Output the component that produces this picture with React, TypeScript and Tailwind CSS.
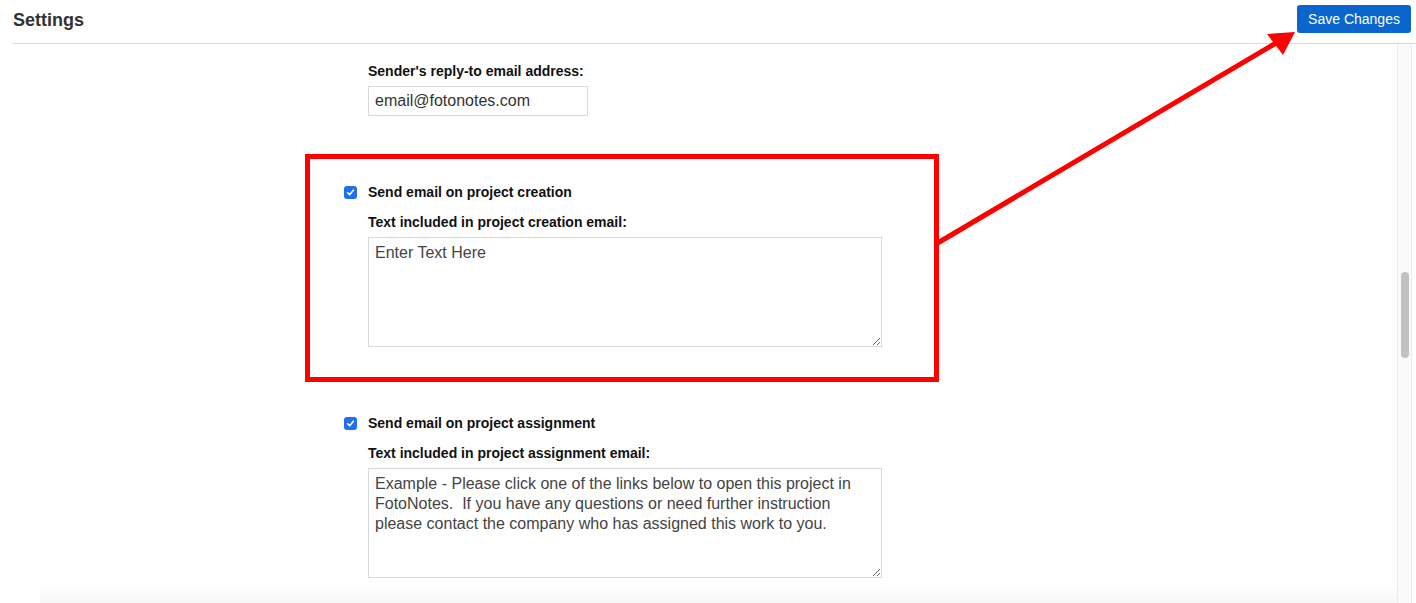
import React from 'react';

const font = "font-['Liberation_Sans',Arial,sans-serif]";

function Check({ label }: { label: string }) {
  return (
    <div className="flex items-center gap-[11px] h-[16px]">
      <span className="w-[13px] h-[13px] rounded-[3px] bg-[#1f6ff0] flex items-center justify-center">
        <svg width="9" height="9" viewBox="0 0 10 10" fill="none">
          <path d="M1.8 5.3 L4 7.4 L8.2 2.4" stroke="white" strokeWidth="1.8" strokeLinecap="round" strokeLinejoin="round" />
        </svg>
      </span>
      <span className="text-[14px] leading-[16px] font-bold text-[#111]">{label}</span>
    </div>
  );
}

function EmailSection({ check, label, text, highlight }: { check: string; label: string; text: string; highlight?: boolean }) {
  return (
    <div
      className={`w-[634px] border-[5px] pl-[34px] pt-[25px] pb-[30px] ${
        highlight ? 'border-[#ff0000]' : 'border-transparent mt-[3px]'
      }`}
    >
      <Check label={check} />
      <div className="pl-[24px]">
        <div className="mt-[14px] text-[14px] leading-[16px] font-bold text-[#111]">{label}</div>
        <textarea
          readOnly
          defaultValue={text}
          className="mt-[7px] block w-[514px] h-[110px] border border-[#d9d9d9] px-[6px] pt-[5px] text-[16px] leading-[20px] text-[#444] outline-none"
        />
      </div>
    </div>
  );
}

export default function App() {
  return (
    <div className={`relative w-[1416px] h-[603px] overflow-hidden bg-white ${font}`}>
      {/* Header */}
      <div className="flex justify-between h-[43px] pl-[13px] pr-[5px]">
        <h1 className="mt-[10px] text-[18px] leading-[20px] font-bold text-[#333]">Settings</h1>
        <button className="mt-[5px] h-[28px] w-[114px] rounded-[3px] bg-[#0a66cc] text-white text-[14px]">
          Save Changes
        </button>
      </div>
      <div className="ml-[12px] border-b border-[#dcdcdc]" />

      <div className="flex h-[559px]">
        {/* Main */}
        <div className="relative flex-1 flex flex-col pl-[305px]">
          <div className="pl-[63px] pt-[19px]">
            <div className="text-[14px] leading-[16px] font-bold text-[#111]">Sender's reply-to email address:</div>
            <input
              readOnly
              defaultValue="email@fotonotes.com"
              className="mt-[7px] block w-[220px] h-[30px] border border-[#d9d9d9] px-[6px] text-[16px] text-[#333] outline-none"
            />
          </div>
          <div className="mt-[38px]">
            <EmailSection
              highlight
              check="Send email on project creation"
              label="Text included in project creation email:"
              text="Enter Text Here"
            />
            <EmailSection
              check="Send email on project assignment"
              label="Text included in project assignment email:"
              text={
                'Example - Please click one of the links below to open this project in FotoNotes.  If you have any questions or need further instruction please contact the company who has assigned this work to you.'
              }
            />
          </div>
          <div className="absolute left-[40px] right-0 bottom-0 h-[18px] bg-gradient-to-b from-transparent to-[#f6f6f6]" />
        </div>

        {/* Scrollbar */}
        <div className="w-[15px] mr-[4px] border-l border-r border-[#ececec] bg-[#fafafa]">
          <div className="mt-[228px] mx-auto w-[8px] h-[86px] rounded-full bg-[#c1c1c1]" />
        </div>
      </div>

      {/* Annotation arrow */}
      <svg className="absolute inset-0 pointer-events-none" width="1416" height="603">
        <line x1="936" y1="244" x2="1276" y2="43" stroke="#ff0000" strokeWidth="5" />
        <polygon points="1295,32 1267,34 1283,55" fill="#ff0000" />
      </svg>
    </div>
  );
}
